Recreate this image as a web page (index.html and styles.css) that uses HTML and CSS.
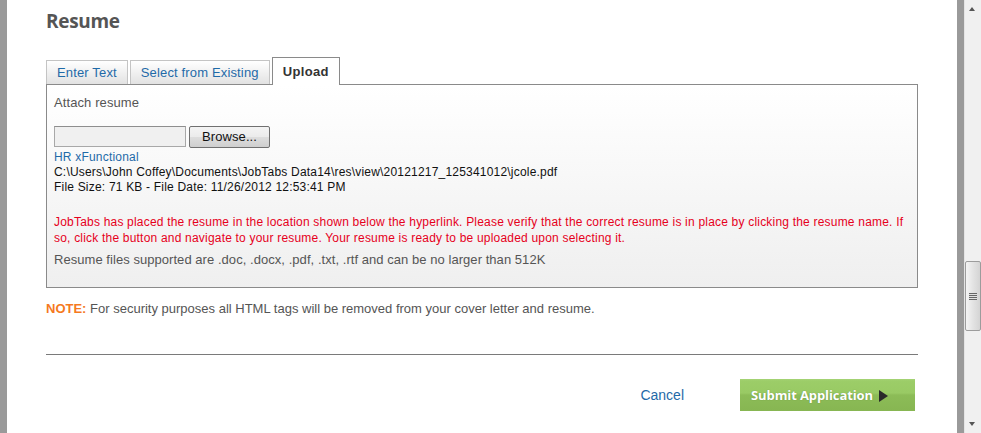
FILE: index.html
```html
<!DOCTYPE html>
<html>
<head>
<meta charset="utf-8">
<link rel="stylesheet" href="styles.css">
</head>
<body>
<div class="frame">
  <div class="side-bar"></div>
  <main class="content">
    <h2 class="title">Resume</h2>
    <div class="tabs">
      <div class="tab">Enter Text</div>
      <div class="tab">Select from Existing</div>
      <div class="tab active">Upload</div>
    </div>
    <div class="panel">
      <div class="attach">Attach resume</div>
      <div class="file-row">
        <div class="file-box"></div>
        <div class="browse">Browse...</div>
      </div>
      <div class="file-info">
        <a class="file-link">HR xFunctional</a>
        <div>C:\Users\John Coffey\Documents\JobTabs Data14\res\view\20121217_125341012\jcole.pdf</div>
        <div>File Size: 71 KB - File Date: 11/26/2012 12:53:41 PM</div>
      </div>
      <p class="warn">JobTabs has placed the resume in the location shown below the hyperlink. Please verify that the correct resume is in place by clicking the resume name. If so, click the button and navigate to your resume. Your resume is ready to be uploaded upon selecting it.</p>
      <p class="support">Resume files supported are .doc, .docx, .pdf, .txt, .rtf and can be no larger than 512K</p>
    </div>
    <p class="note"><span class="note-label">NOTE:</span> For security purposes all HTML tags will be removed from your cover letter and resume.</p>
    <div class="rule"></div>
    <div class="actions">
      <a class="cancel">Cancel</a>
      <div class="submit">Submit Application <span class="arrow"></span></div>
    </div>
  </main>
  <div class="side-bar"></div>
  <div class="scrollbar">
    <div class="sb-arrow up"></div>
    <div class="sb-track">
      <div class="sb-thumb"><span class="grip"></span></div>
    </div>
    <div class="sb-arrow down"></div>
  </div>
</div>
</body>
</html>
```
FILE: styles.css
```css
* { box-sizing: border-box; }
html, body { margin: 0; padding: 0; height: 100%; overflow: hidden; }
body { font-family: "Liberation Sans", Arial, sans-serif; background: #fff; }

.frame { display: flex; height: 433px; }
.side-bar { width: 7px; background: #9a9a9a; flex: none; }
.content { flex: 1; padding: 0 39px; min-width: 0; }

.title {
  margin: 0;
  padding-top: 9px;
  font-family: "Open Sans", sans-serif;
  font-weight: 700;
  font-size: 19px;
  line-height: 24px;
  color: #555;
  letter-spacing: -0.3px;
}

.tabs { display: flex; align-items: flex-end; gap: 2px; margin-top: 24px; }
.tab {
  height: 24px;
  padding: 0 10px;
  border: 1px solid #c4c4c4;
  border-bottom: none;
  background: linear-gradient(#ffffff, #e2e2e2);
  color: #1f6aa8;
  font-size: 13px;
  line-height: 23px;
  letter-spacing: 0.15px;
}
.tab.active {
  height: 28px;
  margin-bottom: -1px;
  position: relative;
  background: #fff;
  border-color: #8a8a8a;
  color: #333;
  font-weight: 700;
  line-height: 27px;
  padding: 0 10px;
  letter-spacing: 0.35px;
}

.panel {
  border: 1px solid #8a8a8a;
  background: linear-gradient(#ffffff, #efefef);
  padding: 10px 7px 19px 7px;
  font-size: 12px;
  letter-spacing: 0.2px;
}
.attach { font-size: 13px; line-height: 16px; color: #555; letter-spacing: 0.1px; }
.file-row { display: flex; gap: 3px; margin-top: 15px; height: 22px; }
.file-box {
  width: 132px; height: 21px;
  border: 1px solid #a8a8a8;
  border-top-color: #8e8e8e;
  background: #f0f0f0;
}
.browse {
  width: 81px; height: 22px;
  border: 1px solid #707070;
  border-radius: 2px;
  background: linear-gradient(#f4f4f4 0%, #ebebeb 50%, #dddddd 51%, #cfcfcf 100%);
  font-size: 13px;
  line-height: 20px;
  text-align: center;
  color: #111;
  letter-spacing: 0.1px;
}
.file-info { margin-top: 2px; line-height: 15px; color: #111; }
.file-link { color: #1f6aa8; display: block; }
.warn { margin: 19px 0 0; line-height: 16px; color: #e6001c; }
.support { margin: 6px 0 0; line-height: 16px; color: #555; font-size: 13px; letter-spacing: 0.05px; }

.note { margin: 13px 0 0; font-size: 13px; line-height: 16px; color: #555; letter-spacing: 0px; }
.note-label { color: #f57a1f; font-weight: 700; }

.rule { margin-top: 37px; height: 1px; background: #7a7a7a; }

.actions { display: flex; justify-content: flex-end; align-items: center; margin-top: 24px; padding-right: 3px; gap: 56px; }
.cancel { color: #1f6aa8; font-size: 14px; line-height: 16px; }
.submit {
  width: 175px; height: 32px;
  padding-left: 11px;
  background: linear-gradient(#a5d477 0px, #9ccd68 2px, #99ca64 14px, #8cbc57 16px, #87b652 100%);
  color: #fff;
  font-family: "Open Sans", sans-serif;
  font-weight: 700;
  font-size: 13px;
  line-height: 31px;
  letter-spacing: -0.1px;
  text-shadow: 0 0 1px rgba(60,90,30,0.5);
  display: flex; align-items: center; gap: 6px;
}
.arrow {
  width: 0; height: 0;
  border-left: 9px solid #2a2a2a;
  border-top: 6px solid transparent;
  border-bottom: 6px solid transparent;
  margin-top: 1px;
}

.scrollbar {
  width: 17px; flex: none;
  background: #f0f0f0;
  border-left: 1px solid #e4e4e4;
  display: flex; flex-direction: column;
}
.sb-arrow { height: 17px; position: relative; }
.sb-arrow::after {
  content: ""; position: absolute; left: 4px; width: 0; height: 0;
  border-left: 3.5px solid transparent; border-right: 3.5px solid transparent;
}
.sb-arrow.up::after { top: 7px; border-bottom: 4px solid #555; }
.sb-arrow.down::after { top: 6px; border-top: 4px solid #555; }
.sb-track { flex: 1; position: relative; }
.sb-thumb {
  position: absolute; left: 0; right: 0; top: 244px; height: 70px;
  border: 1px solid #9c9c9c; border-radius: 2px;
  background: linear-gradient(to right, #f4f4f4, #e3e3e3 50%, #d4d4d4);
  display: flex; align-items: center; justify-content: center;
}
.grip {
  width: 8px; height: 7px;
  background: repeating-linear-gradient(#666 0 1px, #e0e0e0 1px 2px);
}
```
